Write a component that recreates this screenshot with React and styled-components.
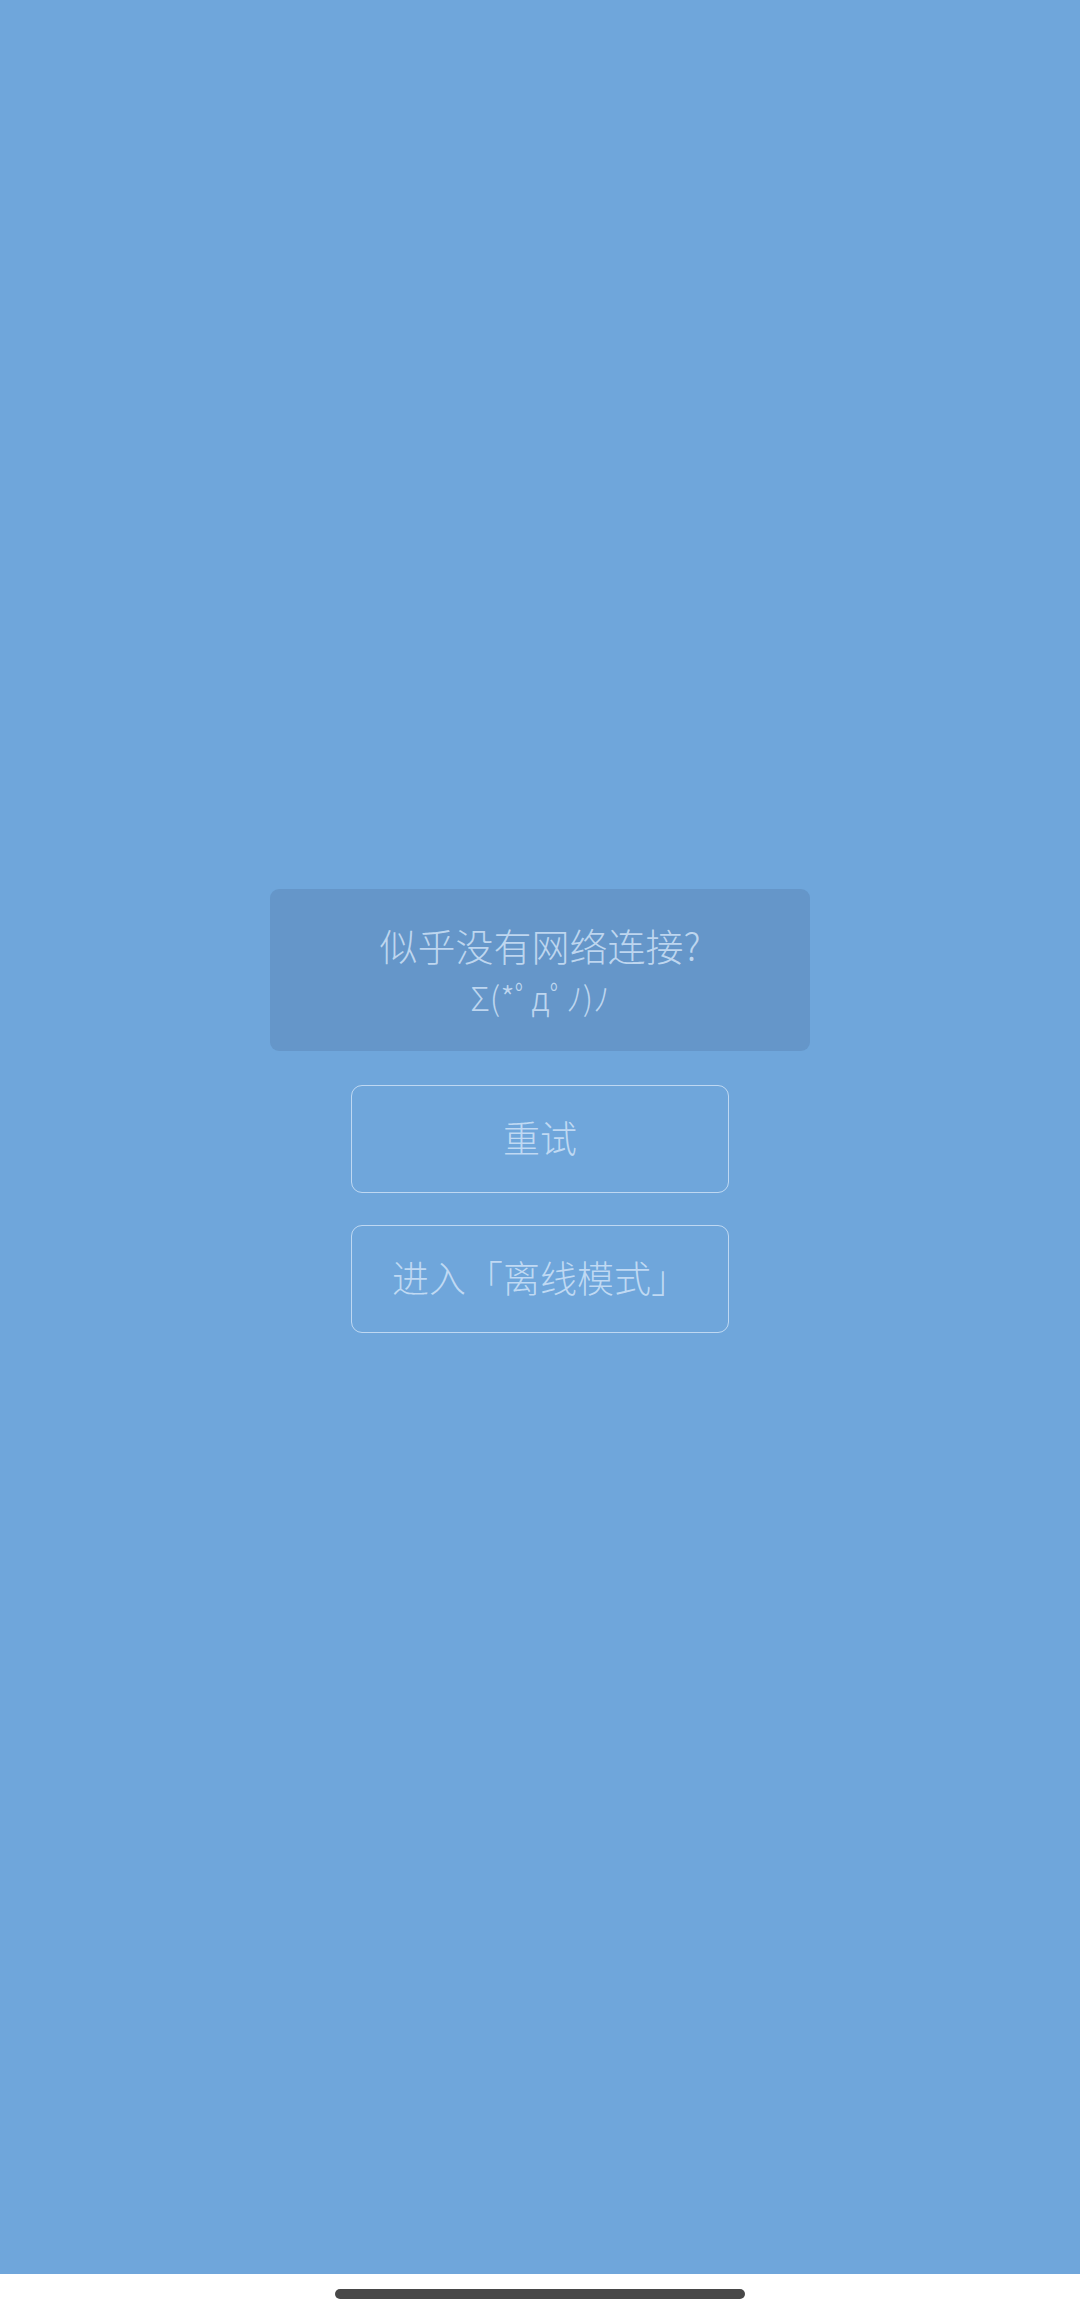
import React from "react";
import styled, { createGlobalStyle } from "styled-components";

const GlobalStyle = createGlobalStyle`
  html, body {
    margin: 0;
    padding: 0;
    background: #ffffff;
  }
  * {
    box-sizing: border-box;
  }
`;

const Screen = styled.div`
  width: 1080px;
  height: 2318px;
  display: flex;
  flex-direction: column;
  font-family: "Noto Sans CJK SC", "Noto Sans", sans-serif;
`;

const Stage = styled.main`
  flex: 1;
  background: #6fa6db;
  display: flex;
  flex-direction: column;
  align-items: center;
  padding-top: 889px;
`;

const Notice = styled.div`
  width: 540px;
  height: 162px;
  border-radius: 9px;
  background: #6596c9;
  display: flex;
  flex-direction: column;
  align-items: center;
  padding-top: 30px;
  color: rgba(215, 232, 250, 0.78);
  font-weight: 300;
  line-height: 52px;
`;

const Line = styled.div`
  white-space: nowrap;
  font-size: ${props => (props.small ? "33px" : "38px")};
`;

const Actions = styled.div`
  display: flex;
  flex-direction: column;
  gap: 32px;
  margin-top: 34px;
`;

const OutlineButton = styled.button`
  width: 378px;
  height: 108px;
  border: 1.5px solid rgba(225, 238, 252, 0.7);
  border-radius: 11px;
  background: transparent;
  color: rgba(215, 232, 250, 0.78);
  font-family: inherit;
  font-size: 37px;
  font-weight: 300;
  display: flex;
  align-items: center;
  justify-content: center;
  padding: 0 0 4px;
  cursor: pointer;
`;

const HomeBar = styled.footer`
  height: 44px;
  background: #ffffff;
  display: flex;
  justify-content: center;
  padding-top: 15px;
`;

const Indicator = styled.div`
  width: 410px;
  height: 10px;
  border-radius: 5px;
  background: #484848;
`;

const App = () => (
  <Screen>
    <GlobalStyle />
    <Stage>
      <Notice>
        <Line>似乎没有网络连接?</Line>
        <Line small>Σ(*ﾟдﾟﾉ)ﾉ</Line>
      </Notice>
      <Actions>
        <OutlineButton>重试</OutlineButton>
        <OutlineButton>进入「离线模式」</OutlineButton>
      </Actions>
    </Stage>
    <HomeBar>
      <Indicator />
    </HomeBar>
  </Screen>
);

export default App;
